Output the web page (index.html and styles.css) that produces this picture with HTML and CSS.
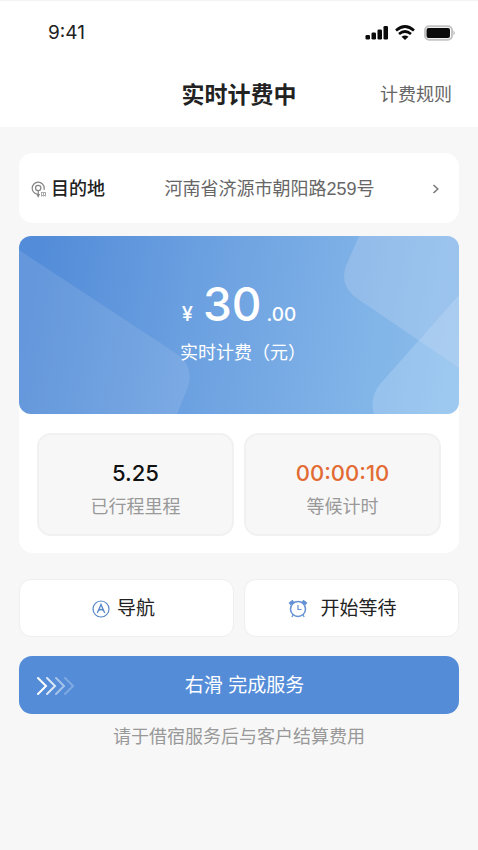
FILE: index.html
```html
<!DOCTYPE html>
<html lang="zh-CN">
<head>
<meta charset="utf-8">
<meta name="viewport" content="width=device-width, initial-scale=1">
<title>实时计费中</title>
<link rel="stylesheet" href="styles.css">
</head>
<body>
<header class="header">
  <div class="status">
    <span>9:41</span>
    <svg class="status-icons" viewBox="0 0 90 18" aria-hidden="true">
      <g fill="#0a0a0a">
        <rect x="0.500" y="11" width="4.500" height="4.500" rx="1.300"/>
        <rect x="6.500" y="8.500" width="4.500" height="7" rx="1.300"/>
        <rect x="12.500" y="5.500" width="4.500" height="10" rx="1.300"/>
        <rect x="18.500" y="2" width="4.500" height="13.500" rx="1.300"/>
        <rect x="61.500" y="4" width="23.500" height="10" rx="2"/>
      </g>
      <g fill="none" stroke="#0a0a0a" stroke-width="2.700">
        <path d="M31 6.500Q40-1.500 49 6.500"/>
        <path d="M34 10Q40 5 46 10"/>
      </g>
      <path d="M36.500 12.700Q40 10.200 43.500 12.700L40 16Z" fill="#0a0a0a"/>
      <rect x="60" y="2.300" width="27" height="13.400" rx="4" fill="none" stroke="#c4c4c4" stroke-width="2"/>
      <path d="M88.500 6.500Q91 9 88.500 11.500Z" fill="#b0b0b0"/>
    </svg>
  </div>
  <div class="titlebar">
    <h1 class="title">实时计费中</h1>
    <a class="rules" href="#rules">计费规则</a>
  </div>
</header>
<main class="content">
  <a class="destination" href="#destination">
    <svg class="pin" viewBox="0 0 16 18" fill="none" stroke="#858585" stroke-width="1.200" aria-hidden="true">
      <path d="M5.500 14C3 13 1.200 11 1.200 8.200A6 6 0 0 1 13.200 8.200V10"/>
      <circle cx="7.200" cy="8" r="2.700"/>
      <path d="M7.200 10.700V16M5.500 13.500L7.200 16.500L8.500 14"/>
      <path d="M10.500 12V16.500M12.500 12V16.500M14.500 12V16.500M10 12.500H15M10 15.500H15" stroke="#aaa" stroke-width="1"/>
    </svg>
    <span class="destination-label">目的地</span>
    <span class="address">河南省济源市朝阳路259号</span>
    <svg class="chevron" viewBox="0 0 8 12" aria-hidden="true"><path d="M1.500 2L5.800 6L1.500 10" fill="none" stroke="#777" stroke-width="1.500"/></svg>
  </a>
  <section class="trip">
    <div class="fee">
      <svg class="fee-art" viewBox="0 0 440 178" preserveAspectRatio="none" aria-hidden="true">
        <path d="M0 14L155 116Q176 129 169 151L158 178H0Z" fill="#fff" fill-opacity=".1"/>
        <path d="M340 0L327 30Q320 50 339 63L440 132V0Z" fill="#c0d4f4" fill-opacity=".32"/>
        <path d="M440 59L362 147Q350 161 355 178H440Z" fill="#d0e4fa" fill-opacity=".26"/>
      </svg>
      <p class="amount"><span class="currency">¥</span><span class="whole">30</span><span class="cents">.00</span></p>
      <p class="fee-label">实时计费（元）</p>
    </div>
    <dl class="stats">
      <div class="stat"><dt>已行程里程</dt><dd>5.25</dd></div>
      <div class="stat"><dt>等候计时</dt><dd class="timer">00:00:10</dd></div>
    </dl>
  </section>
  <div class="actions">
    <button class="action navigate" type="button">
      <svg class="icon nav-icon" viewBox="0 0 18 18" fill="none" stroke="#5688c8" aria-hidden="true">
        <circle cx="9" cy="9" r="8" stroke-width="1.200"/>
        <path d="M5.300 13L9 4.500L12.700 13M6.500 10.500Q9 8.500 11.500 10.500" stroke-width="1.300"/>
      </svg>
      <span>导航</span>
    </button>
    <button class="action wait" type="button">
      <svg class="icon" viewBox="0 0 20 20" fill="none" stroke="#6491d4" aria-hidden="true">
        <circle cx="10" cy="10" r="7.500" stroke-width="1.500"/>
        <path d="M10 6V10.500H13.500" stroke-width="1.200"/>
        <path d="M1.500 5L5.500 2M14.500 2L18.500 5" stroke-width="3"/>
        <path d="M5 16L3.800 18M15 16L16.200 18" stroke-width="1.300"/>
      </svg>
      <span>开始等待</span>
    </button>
  </div>
  <button class="finish" type="button">
    <svg class="arrows" viewBox="0 0 38 20" fill="none" stroke="#fff" stroke-width="2" stroke-linecap="round" aria-hidden="true">
      <path d="M2 2L10 10L2 18"/>
      <path d="M11 2L19 10L11 18" opacity=".8"/>
      <path d="M20 2L28 10L20 18" opacity=".48"/>
      <path d="M29 2L37 10L29 18" opacity=".25"/>
    </svg>
    <span>右滑 完成服务</span>
  </button>
  <p class="note">请于借宿服务后与客户结算费用</p>
</main>
</body>
</html>
```
FILE: styles.css
```css
* {
  box-sizing: border-box;
}

body {
  margin: 0;
  min-height: 100vh;
  background: #f7f7f7;
  color: #222;
  font-family: Inter, "Noto Sans CJK SC", sans-serif;
  font-size: 18px;
  line-height: 26px;
}

p,
h1,
dl,
dd {
  margin: 0;
}

a {
  color: inherit;
  text-decoration: none;
}

button {
  font: inherit;
  color: inherit;
  cursor: pointer;
}

.header {
  background: #fff;
  border-top: 1px solid #f3f3f3;
  padding-bottom: 14px;
}

.status {
  display: flex;
  align-items: center;
  justify-content: space-between;
  height: 64px;
  padding: 0 23px 0 48px;
  font-size: 19px;
}

.status-icons {
  width: 90px;
  height: 18px;
}

.titlebar {
  display: grid;
  grid-template-columns: 1fr auto 1fr;
  align-items: center;
  height: 48px;
  padding: 12px 26px 0;
}

.title {
  grid-column: 2;
  font-size: 23px;
  line-height: 34px;
  font-weight: 700;
}

.rules {
  justify-self: end;
  color: #666;
}

.content {
  padding: 26px 19px;
}

.destination {
  display: flex;
  align-items: center;
  height: 70px;
  padding: 2px 19px 0 12px;
  border-radius: 14px;
  background: #fff;
}

.pin {
  width: 16px;
  height: 18px;
  margin-right: 4px;
}

.destination-label {
  font-weight: 500;
}

.address {
  flex: 1;
  padding-left: 2px;
  font-family: "Liberation Sans", "Noto Sans CJK SC", sans-serif;
  text-align: center;
  color: #666;
}

.chevron {
  width: 8px;
  height: 12px;
}

.trip {
  margin-top: 13px;
  border-radius: 14px;
  background: #fff;
}

.fee {
  position: relative;
  height: 178px;
  padding-top: 40px;
  overflow: hidden;
  border-radius: 12px;
  background: linear-gradient(100deg, #538cd8 5%, #6a9fe0 38%, #7aade5 65%, #8dc0ec 100%);
  color: #fff;
  text-align: center;
}

.fee-art {
  position: absolute;
  inset: 0;
  width: 100%;
  height: 100%;
}

.amount {
  position: relative;
  display: flex;
  align-items: baseline;
  justify-content: center;
  height: 56px;
  line-height: 56px;
}

.currency {
  margin-right: 10px;
  font-size: 20px;
  font-weight: 500;
}

.whole {
  margin-right: 5px;
  font-size: 46px;
  font-weight: 500;
}

.cents {
  font-size: 19px;
  font-weight: 500;
}

.fee-label {
  position: relative;
  margin-top: 8px;
  padding-left: 8px;
}

.stats {
  display: grid;
  grid-template-columns: 1fr 1fr;
  gap: 10px;
  padding: 19px 18px 17px;
}

.stat {
  display: flex;
  flex-direction: column-reverse;
  gap: 6px;
  padding: 24px 8px 14px;
  border: 2px solid #f1f1f1;
  border-radius: 14px;
  background: #f7f7f7;
  text-align: center;
}

.stat dt {
  color: #999;
}

.stat dd {
  font-size: 22px;
  line-height: 29px;
  font-weight: 500;
  color: #111;
}

.stat .timer {
  color: #e26b34;
}

.actions {
  display: grid;
  grid-template-columns: 1fr 1fr;
  gap: 10px;
  margin-top: 26px;
}

.action {
  display: flex;
  align-items: center;
  justify-content: center;
  gap: 7px;
  height: 58px;
  padding: 2px 8px 0;
  border: 1px solid #eee;
  border-radius: 12px;
  background: #fff;
  font-size: 19px;
}

.navigate {
  padding-right: 14px;
}

.wait {
  gap: 12px;
  padding-right: 26px;
}

.icon {
  width: 20px;
  height: 20px;
}

.nav-icon {
  width: 18px;
  height: 18px;
}

.finish {
  display: grid;
  grid-template-columns: 1fr auto 1fr;
  align-items: center;
  width: 100%;
  height: 58px;
  margin-top: 19px;
  padding: 2px 6px 0 17px;
  border: 0;
  border-radius: 13px;
  background: #548cd8;
  color: #fff;
  font-size: 19px;
}

.arrows {
  width: 38px;
  height: 20px;
}

.note {
  margin-top: 10px;
  color: #999;
  text-align: center;
}
```
